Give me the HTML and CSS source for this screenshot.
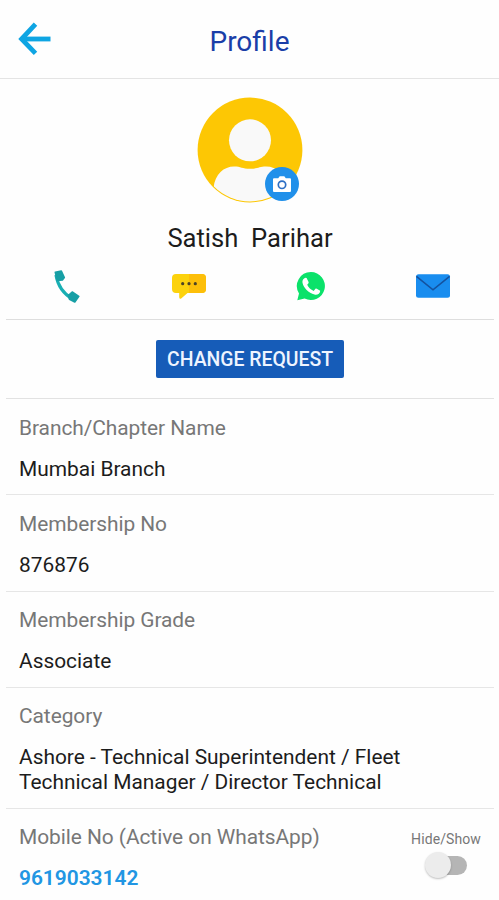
FILE: index.html
```html
<!DOCTYPE html>
<html lang="en">
<head>
  <meta charset="UTF-8" />
  <meta name="viewport" content="width=device-width, initial-scale=1.0" />
  <title>Profile</title>
  <link rel="stylesheet" href="styles.css">
</head>
<body>
  <header class="header">
    <button class="back-btn" aria-label="Back">
      <svg width="34" height="34" viewBox="0 0 34 34" fill="none" stroke="#0ea5e3" stroke-width="4.8">
        <path d="M17.5 2.2 L3.6 17 L17.5 31.4" />
        <path d="M3.5 17 H32.5" />
      </svg>
    </button>
    <h1 class="title">Profile</h1>
  </header>

  <main class="content">
    <section class="profile">
      <div class="avatar">
        <svg width="106" height="106" viewBox="0 0 106 106">
          <defs>
            <clipPath id="avatar-clip"><circle cx="53" cy="53" r="51.4" /></clipPath>
          </defs>
          <circle cx="53" cy="53" r="52.4" fill="#fdc704" />
          <circle cx="53" cy="43.3" r="21" fill="#f9f9f9" />
          <path clip-path="url(#avatar-clip)" fill="#f9f9f9" d="M16.5 91 C18 77 27 69.5 37 69.5 C44 69.5 45 71.8 53 71.8 C61 71.8 62 69.5 69 69.5 C80 69.5 88 77 90 91 L90 106 H16 Z" />
        </svg>
        <span class="camera">
          <svg width="18" height="16" viewBox="0 0 18 16">
            <path fill="#fff" d="M1 2.3 H5.2 L6.7 0.3 H11.3 L12.8 2.3 H17 Q18 2.3 18 3.3 V15 Q18 16 17 16 H1 Q0 16 0 15 V3.3 Q0 2.3 1 2.3 Z" />
            <circle cx="9" cy="8.8" r="3.7" fill="none" stroke="#2d6fc4" stroke-width="1.7" />
          </svg>
        </span>
      </div>

      <h2 class="name">Satish&nbsp; Parihar</h2>

      <div class="actions">
        <a class="action" aria-label="Call">
          <svg width="36" height="36" viewBox="0 0 36 36">
            <path fill="none" stroke="#18afb3" stroke-width="3.2" d="M7 7 C8.5 16 14 25.5 23.5 31" />
            <path fill="#179fa5" stroke="#179fa5" stroke-width="1.6" stroke-linejoin="round" d="M6.3 4.2 L12.3 3 L15.3 9.6 L13.4 12 L8.3 12.5 Z" />
            <path fill="#179fa5" stroke="#179fa5" stroke-width="1.6" stroke-linejoin="round" d="M19.3 27.6 L23.2 24 L29.8 28.4 L25.8 34 L20.5 31.2 Z" />
          </svg>
        </a>
        <a class="action" aria-label="Message">
          <svg width="36" height="36" viewBox="0 0 36 36">
            <path fill="#fcd20d" d="M5 6 H31 Q35 6 35 10 V21 Q35 25 31 25 H16.5 L10.2 30.4 Q8.2 31.7 8.2 29 V25 H5 Q1 25 1 21 V10 Q1 6 5 6 Z" />
            <path fill="#fdbf0a" d="M18 6 H31 Q35 6 35 10 V21 Q35 25 31 25 H18 Z" />
            <g fill="#4c4325">
              <circle cx="11.7" cy="15.7" r="1.6" />
              <circle cx="18" cy="15.7" r="1.6" />
              <circle cx="24.3" cy="15.7" r="1.6" />
            </g>
          </svg>
        </a>
        <a class="action" aria-label="WhatsApp">
          <svg width="36" height="36" viewBox="0 0 36 36">
            <path fill="#0be26a" d="M18 4 A14 14 0 1 1 11.6 30.5 L4.3 32.2 L6 25.4 A14 14 0 0 1 18 4 Z" />
            <path fill="#fff" d="M11.1 10.4 Q12.3 9.6 13.6 10 L15.7 14.2 Q15.7 15.4 14.2 16.8 C15.5 19.5 17.8 21.8 20.7 22.9 L22.4 20.8 Q23 20.3 23.8 20.8 L27.2 22.7 C27.1 25.8 24.2 27.3 21.5 26.6 C15.6 25 10.5 20 9.5 14.8 C9.2 12.8 9.8 11.3 11.1 10.4 Z" />
          </svg>
        </a>
        <a class="action" aria-label="Email">
          <svg width="36" height="36" viewBox="0 0 36 36">
            <rect x="1" y="6.3" width="34" height="23.5" rx="2.5" fill="#198def" />
            <path fill="none" stroke="#14529f" stroke-width="1.6" d="M1.4 8.4 L18 21.8 L34.6 8.4" />
          </svg>
        </a>
      </div>
    </section>

    <section class="request">
      <button class="request-btn">CHANGE REQUEST</button>
    </section>

    <section class="field">
      <p class="label">Branch/Chapter Name</p>
      <p class="value">Mumbai Branch</p>
    </section>
    <section class="field">
      <p class="label">Membership No</p>
      <p class="value">876876</p>
    </section>
    <section class="field">
      <p class="label">Membership Grade</p>
      <p class="value">Associate</p>
    </section>
    <section class="field">
      <p class="label">Category</p>
      <p class="value">Ashore - Technical Superintendent / Fleet Technical Manager / Director Technical</p>
    </section>
    <section class="field mobile">
      <div>
        <p class="label">Mobile No (Active on WhatsApp)</p>
        <p class="value phone">9619033142</p>
      </div>
      <div class="toggle">
        <span class="toggle-label">Hide/Show</span>
        <span class="switch"></span>
      </div>
    </section>
  </main>
</body>
</html>
```
FILE: styles.css
```css
* {
  margin: 0;
  padding: 0;
  box-sizing: border-box;
}

body {
  font-family: Roboto, Arial, sans-serif;
  background: #fefefe;
  color: #1c1c1c;
  height: 900px;
  overflow: hidden;
}

button {
  border: none;
  background: none;
  font-family: inherit;
  cursor: pointer;
}

.header {
  display: grid;
  grid-template-columns: 60px 1fr 60px;
  align-items: center;
  height: 79px;
  border-bottom: 1.5px solid #e4e4e4;
}

.back-btn {
  display: flex;
  padding-left: 18px;
}

.title {
  text-align: center;
  font-size: 28px;
  font-weight: 400;
  line-height: 34px;
  color: #1a3ea8;
  padding-top: 5px;
}

.content {
  padding: 0 5px 0 6px;
}

.profile {
  display: flex;
  flex-direction: column;
  align-items: center;
  height: 241px;
  padding-top: 18px;
  border-bottom: 1.5px solid #dedede;
}

.avatar {
  position: relative;
  height: 106px;
}

.camera {
  position: absolute;
  right: 4px;
  bottom: 2px;
  display: flex;
  align-items: center;
  justify-content: center;
  width: 34px;
  height: 34px;
  border-radius: 50%;
  background: #2090ea;
}

.name {
  margin-top: 19px;
  font-size: 25.6px;
  font-weight: 400;
  line-height: 32px;
}

.actions {
  display: grid;
  grid-template-columns: repeat(4, 1fr);
  width: 100%;
  margin-top: 14px;
}

.action {
  display: flex;
  justify-content: center;
}

.request {
  display: flex;
  justify-content: center;
  height: 79px;
  padding-top: 20px;
  border-bottom: 1.5px solid #e2e2e2;
}

.request-btn {
  width: 188px;
  height: 38px;
  padding-top: 1px;
  border-radius: 2px;
  background: #165cb8;
  color: #eef4ff;
  font-size: 19.4px;
  font-weight: 500;
}

.field {
  padding: 16.5px 13px 13.3px;
  border-bottom: 1.5px solid #e6e6e6;
}

.label,
.value {
  font-size: 20.9px;
  line-height: 24.5px;
}

.label {
  color: #777;
  margin-bottom: 16.5px;
  letter-spacing: -0.05px;
}

.value {
  max-width: 400px;
}

.mobile {
  display: flex;
  justify-content: space-between;
  border-bottom: none;
}

.phone {
  color: #2196e3;
  font-weight: 600;
}

.toggle {
  display: flex;
  flex-direction: column;
  align-items: center;
  padding-top: 6px;
}

.toggle-label {
  font-size: 14px;
  line-height: 16px;
  color: #777;
  letter-spacing: 0.1px;
}

.switch {
  position: relative;
  width: 36px;
  height: 19px;
  margin: 9px 0 0 6px;
  border-radius: 10px;
  background: #b5b5b5;
}

.switch::before {
  content: "";
  position: absolute;
  left: -6px;
  top: -4px;
  width: 26px;
  height: 26px;
  border-radius: 50%;
  background: #ececec;
  box-shadow: 0 1px 2px rgba(0, 0, 0, 0.25);
}
```
